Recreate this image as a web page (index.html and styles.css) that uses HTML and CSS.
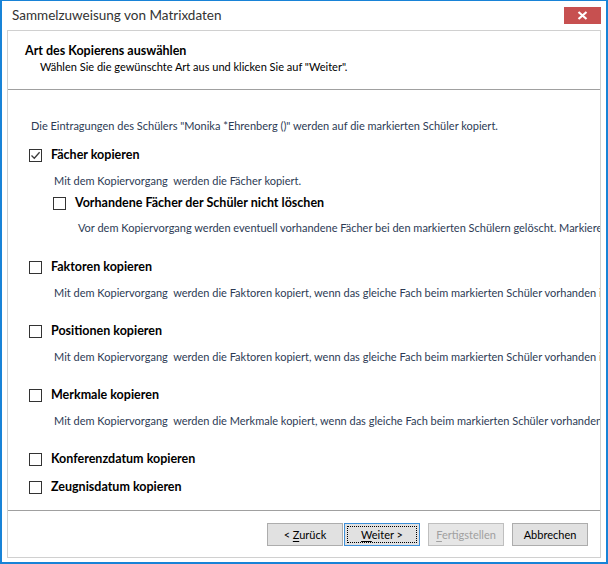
FILE: index.html
```html
<!DOCTYPE html>
<html lang="de">
<head>
<meta charset="utf-8">
<title>Sammelzuweisung von Matrixdaten</title>
<link rel="stylesheet" href="styles.css">
</head>
<body>
<div class="window">
  <div class="titlebar">
    <span class="title">Sammelzuweisung von Matrixdaten</span>
    <span class="close"><svg width="11" height="9" viewBox="0 0 11 9"><path d="M1.5 1 L9.5 8 M9.5 1 L1.5 8" stroke="#fff" stroke-width="2.2"/></svg></span>
  </div>
  <div class="panel">
    <div class="header">
      <div class="h-title">Art des Kopierens auswählen</div>
      <div class="h-sub">Wählen Sie die gewünschte Art aus und klicken Sie auf "Weiter".</div>
    </div>
    <div class="content">
      <div class="row intro">Die Eintragungen des Schülers "Monika *Ehrenberg ()" werden auf die markierten Schüler kopiert.</div>

      <div class="row opt g-first"><span class="box"><svg width="11" height="11" viewBox="0 0 11 11"><path d="M1.5 5.5 L4.3 8.3 L9.6 2.2" fill="none" stroke="#3a3a3a" stroke-width="1.3"/></svg></span><span class="label">Fächer kopieren</span></div>
      <div class="row desc d-first">Mit dem Kopiervorgang  werden die Fächer kopiert.</div>
      <div class="row opt sub g-sub"><span class="box"></span><span class="label">Vorhandene Fächer der Schüler nicht löschen</span></div>
      <div class="row desc sub d-sub">Vor dem Kopiervorgang werden eventuell vorhandene Fächer bei den markierten Schülern gelöscht. Markieren Sie diese Option, um sie zu behalten.</div>

      <div class="row opt g-next"><span class="box"></span><span class="label">Faktoren kopieren</span></div>
      <div class="row desc">Mit dem Kopiervorgang  werden die Faktoren kopiert, wenn das gleiche Fach beim markierten Schüler vorhanden ist.</div>

      <div class="row opt g-std"><span class="box"></span><span class="label">Positionen kopieren</span></div>
      <div class="row desc">Mit dem Kopiervorgang  werden die Faktoren kopiert, wenn das gleiche Fach beim markierten Schüler vorhanden ist.</div>

      <div class="row opt g-std"><span class="box"></span><span class="label">Merkmale kopieren</span></div>
      <div class="row desc">Mit dem Kopiervorgang  werden die Merkmale kopiert, wenn das gleiche Fach beim markierten Schüler vorhanden ist.</div>

      <div class="row opt g-std"><span class="box"></span><span class="label">Konferenzdatum kopieren</span></div>
      <div class="row opt g-last"><span class="box"></span><span class="label">Zeugnisdatum kopieren</span></div>
    </div>
    <div class="footer">
      <span class="btn"><span class="cap">&lt; <u>Z</u>urück</span></span>
      <span class="btn focus"><span class="cap"><u>W</u>eiter &gt;</span></span>
      <span class="btn disabled"><span class="cap"><u>F</u>ertigstellen</span></span>
      <span class="btn"><span class="cap">Abbrechen</span></span>
    </div>
  </div>
</div>
</body>
</html>
```

FILE: styles.css
```css
html, body {
  margin: 0;
  padding: 0;
}
body {
  width: 608px;
  height: 564px;
  overflow: hidden;
  font-family: "Lato", "Open Sans", sans-serif;
  font-size: 11px;
  color: #000;
}
.window {
  box-sizing: border-box;
  width: 608px;
  height: 564px;
  border: 2px solid #1883d7;
  border-top-width: 1px;
  background: #fff;
  display: flex;
  flex-direction: column;
  padding: 0 5px 4px 5px;
}
.titlebar {
  height: 29px;
  flex: none;
  display: flex;
  align-items: flex-start;
  justify-content: space-between;
}
.title {
  padding-left: 5px;
  font-size: 13.5px;
  line-height: 29px;
  color: #333;
}
.close {
  margin-top: 6px;
  width: 37px;
  height: 17px;
  background: #c75050;
  display: flex;
  align-items: center;
  justify-content: center;
}
.panel {
  flex: 1;
  border: 1px solid #d0d0d0;
  background: #fff;
  display: flex;
  flex-direction: column;
  overflow: hidden;
  min-height: 0;
}
.header {
  height: 58px;
  flex: none;
  border-bottom: 1px solid #a0a0a0;
}
.h-title {
  margin-top: 12px;
  padding-left: 17px;
  font-weight: bold;
  font-size: 12.5px;
  line-height: 16px;
}
.h-sub {
  padding-left: 32px;
  line-height: 16px;
}
.content {
  flex: 1;
  min-height: 0;
  overflow: hidden;
  padding-top: 28px;
}
.row {
  height: 16px;
  line-height: 16px;
  white-space: pre;
}
.intro {
  padding-left: 23px;
  color: #2d3b55;
}
.opt {
  display: flex;
  align-items: center;
  padding-left: 21px;
}
.opt.sub {
  padding-left: 45px;
}
.box {
  box-sizing: border-box;
  width: 13px;
  height: 13px;
  border: 1px solid #333;
  background: #fff;
  display: flex;
  align-items: center;
  justify-content: center;
  flex: none;
}
.label {
  margin-left: 9px;
  font-weight: bold;
  font-size: 12.5px;
}
.desc {
  padding-left: 46px;
  color: #2d3b55;
  margin-top: 10px;
}
.desc.sub {
  padding-left: 70px;
}
.g-first { margin-top: 13px; }
.d-first { margin-top: 10px; }
.g-sub { margin-top: 6px; }
.d-sub { margin-top: 9px; }
.g-next { margin-top: 23px; }
.g-std { margin-top: 22px; }
.g-last { margin-top: 12px; }

.footer {
  flex: none;
  border-top: 1px solid #a0a0a0;
  padding: 12px 12px 11px 0;
  display: flex;
  justify-content: flex-end;
  gap: 8px;
}
.btn {
  box-sizing: border-box;
  width: 76px;
  height: 23px;
  border: 1px solid #adadad;
  background: #e1e1e1;
  display: flex;
  align-items: center;
  justify-content: center;
  color: #000;
}
.btn:first-child {
  margin-right: -7px;
}
.btn.focus {
  border-color: #3c8fd9;
  outline: 1px dotted #000;
  outline-offset: -4px;
}
.btn.disabled {
  color: #a0a0a0;
  border-color: #bfbfbf;
  background: #e6e6e6;
}
.cap {
  white-space: pre;
}
.btn u {
  text-decoration-thickness: 1px;
  text-underline-offset: 2px;
}
```
